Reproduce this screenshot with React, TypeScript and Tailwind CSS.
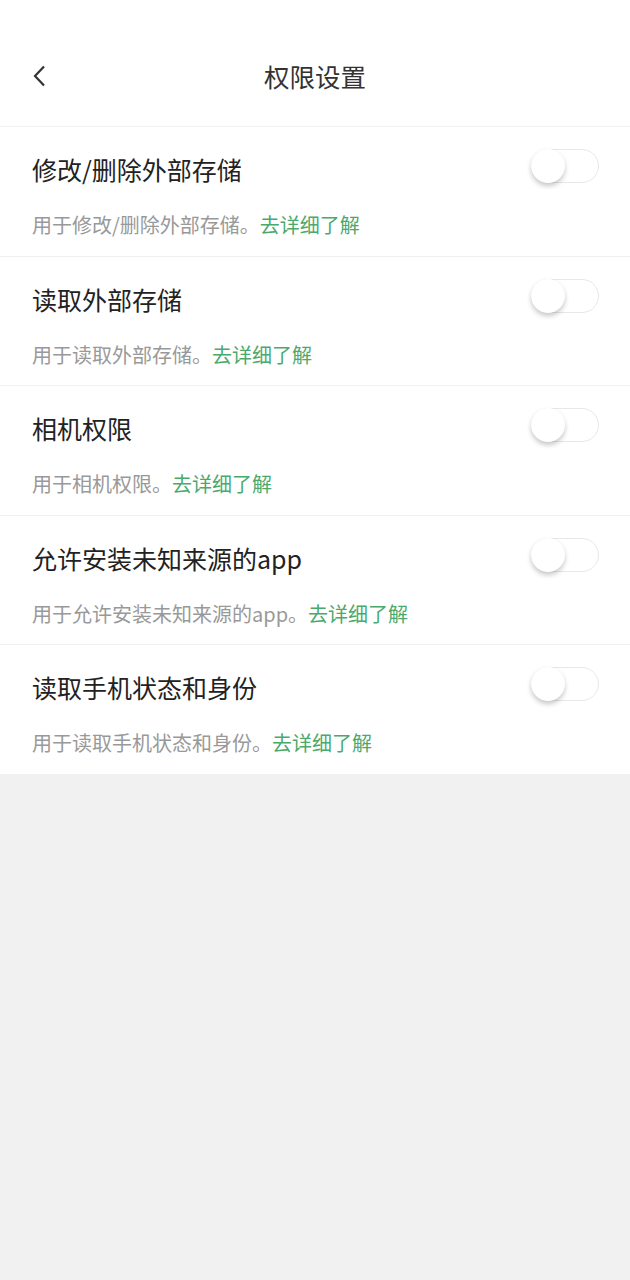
import { useState } from 'react';

const ITEMS = [
  { title: '修改/删除外部存储', desc: '用于修改/删除外部存储。' },
  { title: '读取外部存储', desc: '用于读取外部存储。' },
  { title: '相机权限', desc: '用于相机权限。' },
  { title: '允许安装未知来源的app', desc: '用于允许安装未知来源的app。' },
  { title: '读取手机状态和身份', desc: '用于读取手机状态和身份。' },
];

function Toggle({ on, onClick }: { on: boolean; onClick: () => void }) {
  return (
    <button
      onClick={onClick}
      className={`relative mb-[6px] h-[34px] w-[68px] shrink-0 rounded-full border border-[#e8e8e8] ${on ? 'bg-[#4aa96c]' : 'bg-white'}`}
    >
      <span
        className={`absolute top-[-1px] h-[34px] w-[34px] rounded-full bg-white shadow-[0_3px_5px_rgba(0,0,0,0.22)] ${on ? 'left-[33px]' : 'left-[-1px]'}`}
      />
    </button>
  );
}

export default function App() {
  const [state, setState] = useState<boolean[]>(ITEMS.map(() => false));

  return (
    <div className="min-h-[1280px] w-[630px] bg-[#f1f1f1] font-['Noto_Sans_CJK_SC','Noto_Sans',sans-serif]">
      <div className="flex h-[126px] items-start bg-white pl-[32px] pr-[32px] pt-[56px]">
        <svg width="16" height="22" viewBox="0 0 16 22" className="mt-[9px]">
          <path d="M12 1.5 L3 11 L12 20.5" fill="none" stroke="#333" strokeWidth="2.2" />
        </svg>
        <h1 className="flex-1 pr-[16px] text-center text-[25.5px] leading-[40px] text-[#333]">权限设置</h1>
      </div>

      {ITEMS.map((item, i) => (
        <div key={item.title} className="border-t border-[#f0f0f0] bg-white pl-[32px] pr-[31px] pt-[22px] pb-[15.6px]">
          <div className="flex h-[40px] items-center justify-between">
            <span className="text-[25px] leading-[40px] text-[#222]">{item.title}</span>
            <Toggle
              on={state[i]}
              onClick={() => setState((s) => s.map((v, j) => (j === i ? !v : v)))}
            />
          </div>
          <p className="mt-[21px] text-[20px] leading-[30px] text-[#999]">
            {item.desc}
            <span className="text-[#4aa96c]">去详细了解</span>
          </p>
        </div>
      ))}
    </div>
  );
}
